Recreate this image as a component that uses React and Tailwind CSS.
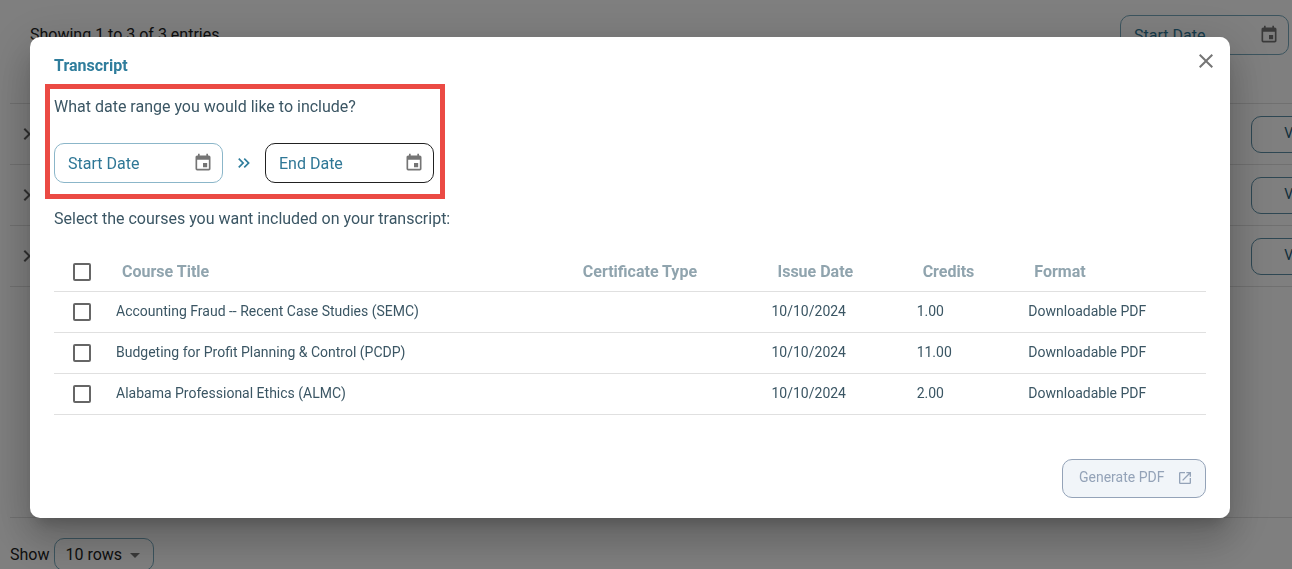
import {
  MdArrowDropDown,
  MdChevronRight,
  MdClose,
  MdEvent,
  MdKeyboardDoubleArrowRight,
  MdOpenInNew,
} from "react-icons/md";

const COURSES = [
  { title: "Accounting Fraud -- Recent Case Studies (SEMC)", type: "", issued: "10/10/2024", credits: "1.00", format: "Downloadable PDF" },
  { title: "Budgeting for Profit Planning & Control (PCDP)", type: "", issued: "10/10/2024", credits: "11.00", format: "Downloadable PDF" },
  { title: "Alabama Professional Ethics (ALMC)", type: "", issued: "10/10/2024", credits: "2.00", format: "Downloadable PDF" },
];

function DateField({ label, borderClass }) {
  return (
    <div className={`flex h-10 w-[169px] items-center rounded-[10px] border pr-[7px] pl-[13px] ${borderClass}`}>
      <input
        type="text"
        aria-label={label}
        placeholder={label}
        className="min-w-0 flex-1 bg-transparent pt-0.5 text-base text-[#2f7796] outline-none placeholder:text-[#2f7796]"
      />
      <button type="button" aria-label={`Choose ${label}`} className="flex size-6 items-center justify-center text-[#757575]">
        <MdEvent size={20} />
      </button>
    </div>
  );
}

function CheckBox({ label }) {
  return (
    <input
      type="checkbox"
      aria-label={label}
      className="ml-[19px] block size-[18px] appearance-none rounded-[2px] border-2 border-[#666666] checked:bg-[#2c7594]"
    />
  );
}

function HistoryPage() {
  return (
    <main className="pt-[15px] pl-2.5">
      <header className="flex items-start justify-between pr-[3px] pl-5">
        <p className="pt-2 text-base text-[#212121]">Showing 1 to 3 of 3 entries</p>
        <DateField label="Start Date" borderClass="border-[#78a9bd]" />
      </header>
      <section className="mt-12 min-h-[415px] w-[calc(100%+80px)] border-y border-[#e0e0e0]">
        {COURSES.map((course) => (
          <div key={course.title} className="flex h-[61px] items-center justify-between border-b border-[#e0e0e0] pr-6 pl-[5px]">
            <button type="button" aria-label={`Expand ${course.title}`} className="text-[#616161]">
              <MdChevronRight size={24} />
            </button>
            <button type="button" className="h-[37px] w-[97px] rounded-[10px] border border-[#5c8fa6] pb-0.5 text-sm text-[#1d5a75]">
              View
            </button>
          </div>
        ))}
      </section>
      <footer className="flex items-center gap-[5px] pt-5 text-base text-[#212121]">
        <label htmlFor="page-size">Show</label>
        <div className="grid items-center">
          <select
            id="page-size"
            className="col-start-1 row-start-1 h-[33px] w-[100px] appearance-none rounded-[10px] border border-[#78a9bd] pl-2.5 outline-none"
          >
            <option>10 rows</option>
            <option>25 rows</option>
          </select>
          <MdArrowDropDown size={24} className="pointer-events-none col-start-1 row-start-1 mr-[7px] justify-self-end text-[#757575]" />
        </div>
      </footer>
    </main>
  );
}

function TranscriptDialog() {
  return (
    <section
      role="dialog"
      aria-modal="true"
      aria-labelledby="transcript-title"
      className="mr-[62px] ml-[30px] rounded-[10px] bg-white px-6 pb-5 text-[#3b5664] shadow-[0_11px_15px_-7px_rgba(0,0,0,0.2),0_24px_38px_3px_rgba(0,0,0,0.14),0_9px_46px_8px_rgba(0,0,0,0.12)]"
    >
      <header className="-mr-3 flex items-start justify-between pt-3">
        <h2 id="transcript-title" className="pt-[5px] text-base font-bold text-[#2f7d9c]">Transcript</h2>
        <button type="button" aria-label="Close" className="text-[#757575]">
          <MdClose size={24} />
        </button>
      </header>

      <div className="mt-1.5 -ml-[9px] w-fit border-[5px] border-[#eb4a44] pt-1.5 pr-1.5 pb-[11px] pl-1">
        <p className="text-base">What date range you would like to include?</p>
        <div className="mt-6 flex items-center">
          <DateField label="Start Date" borderClass="border-[#8bb6c9]" />
          <MdKeyboardDoubleArrowRight size={20} className="mx-[11px] text-[#2f7d9c]" />
          <DateField label="End Date" borderClass="border-[#212121]" />
        </div>
      </div>

      <p className="mt-2 text-base">Select the courses you want included on your transcript:</p>

      <table className="mt-[23px] w-full table-fixed text-left">
        <colgroup>
          <col className="w-[62px]" />
          <col className="w-[40%]" />
          <col className="w-[16.9%]" />
          <col className="w-[12.6%]" />
          <col className="w-[9.7%]" />
          <col />
        </colgroup>
        <thead>
          <tr className="h-[37px] border-b border-[#e0e0e0] text-base text-[#90a4ae]">
            <th><CheckBox label="Select all courses" /></th>
            <th className="pl-1.5 font-bold">Course Title</th>
            <th className="pl-1.5 font-bold">Certificate Type</th>
            <th className="pl-1.5 font-bold">Issue Date</th>
            <th className="pl-1.5 font-bold">Credits</th>
            <th className="pl-1.5 font-bold">Format</th>
          </tr>
        </thead>
        <tbody>
          {COURSES.map((course) => (
            <tr key={course.title} className="h-[41px] border-b border-[#e0e0e0] text-sm">
              <td><CheckBox label={course.title} /></td>
              <td className="pb-0.5">{course.title}</td>
              <td className="pb-0.5">{course.type}</td>
              <td className="pb-0.5">{course.issued}</td>
              <td className="pb-0.5">{course.credits}</td>
              <td className="pb-0.5">{course.format}</td>
            </tr>
          ))}
        </tbody>
      </table>

      <div className="mt-11 flex justify-end">
        <button
          type="button"
          disabled
          className="flex h-[39px] w-36 items-center justify-between rounded-[10px] border border-[#94a3b8] bg-[#f1f5f9] pr-3 pl-4 text-sm text-[#94a3b8]"
        >
          <span className="pb-0.5">Generate PDF</span>
          <MdOpenInNew size={16} />
        </button>
      </div>
    </section>
  );
}

export default function App() {
  return (
    <div className="h-screen overflow-hidden bg-white font-['Roboto',sans-serif]">
      <HistoryPage />
      <div className="fixed inset-0 bg-black/50 pt-[37px]">
        <TranscriptDialog />
      </div>
    </div>
  );
}
